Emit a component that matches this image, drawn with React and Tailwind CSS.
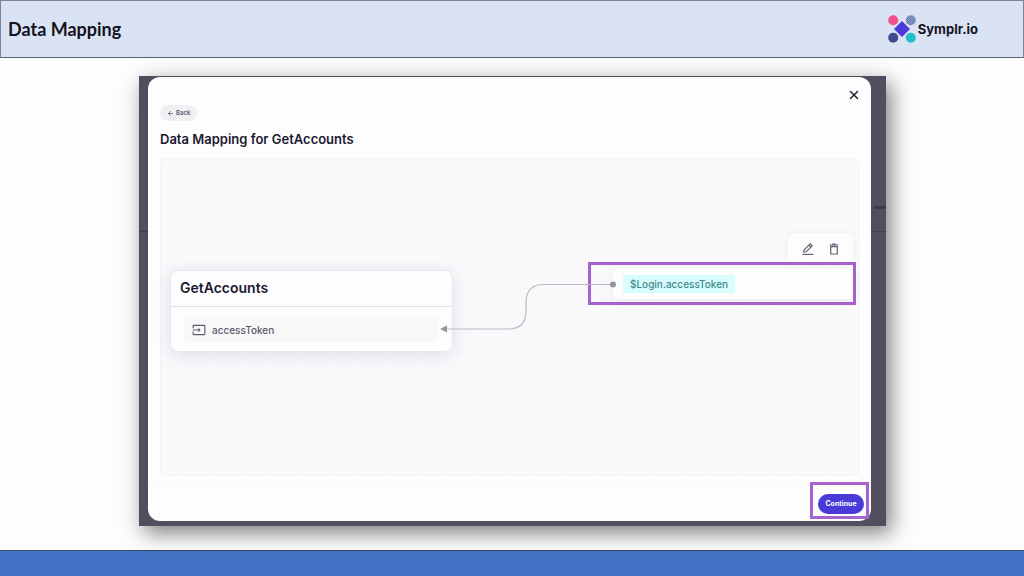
import { X, ArrowLeft } from "lucide-react";
import { MdOutlineInput } from "react-icons/md";

const Logo = () => {
    return (
        <div className="flex items-center gap-0.5">
            <svg className="w-7 h-7" viewBox="0 0 28 28" aria-hidden="true">
                <defs>
                    <pattern id="weaveLight" width="2" height="2" patternUnits="userSpaceOnUse">
                        <rect width="2" height="2" fill="#8f97b8" />
                        <rect width="1" height="1" fill="#5f83c2" />
                        <rect x="1" y="1" width="1" height="1" fill="#5f83c2" />
                    </pattern>
                    <pattern id="weaveDark" width="2" height="2" patternUnits="userSpaceOnUse">
                        <rect width="2" height="2" fill="#2f4aa0" />
                        <rect width="1" height="1" fill="#4d4a78" />
                        <rect x="1" y="1" width="1" height="1" fill="#4d4a78" />
                    </pattern>
                </defs>
                <circle cx="5.2" cy="5.2" r="5" fill="#f0508c" />
                <circle cx="22.8" cy="5.2" r="5" fill="url(#weaveLight)" />
                <circle cx="5.2" cy="22.8" r="5" fill="url(#weaveDark)" />
                <circle cx="22.8" cy="22.8" r="5" fill="#22bfc9" />
                <path d="M14 6 L22 14 L14 22 L6 14 Z" fill="#4b3ad9" />
            </svg>
            <span className="text-[13px] leading-5 font-bold text-[#16151f]">Symplr.io</span>
        </div>
    );
};

const PenIcon = () => (
    <svg className="w-3 h-3" viewBox="0 0 12 12" fill="none" stroke="#5d5b6e" strokeWidth="1.1" aria-hidden="true">
        <path d="M1.6 9.2 L2 7 L8.2 0.8 L10.2 2.8 L4 8.8 Z" strokeLinejoin="round" />
        <path d="M6.9 2.1 L8.9 4.1" />
        <path d="M0.5 11.4 H11.5" />
    </svg>
);

const TrashIcon = () => (
    <svg className="w-3 h-3" viewBox="0 0 12 12" fill="none" stroke="#5d5b6e" strokeWidth="1.2" aria-hidden="true">
        <path d="M1.5 2 H10.5 M4.3 1 H7.7" />
        <path d="M2.7 3.6 V11 H9.3 V3.6 Z" strokeLinejoin="round" />
    </svg>
);

// line from the source value to the input it fills
const Connector = () => (
    <svg className="absolute left-[280px] top-[120px]" width="178" height="60" viewBox="0 0 178 60" fill="none" aria-hidden="true">
        <path
            d="M173 6.5 H104 Q86 6.5 86 24.5 V33 Q86 51 68 51 H6"
            stroke="#b9b8be"
            strokeWidth="1.2"
        />
        <path d="M0 51 L7 47.5 V54.5 Z" fill="#94949e" />
        <circle cx="173" cy="6.5" r="3" fill="#94949e" />
    </svg>
);

const TargetNode = ({ title, field }) => {
    return (
        <div className="absolute left-[10px] top-[112px] w-[283px] rounded-lg bg-[#fdfdfe] inset-ring inset-ring-[#e8e8ec] shadow-[0_3px_16px_rgba(40,40,70,0.12)]">
            <h3 className="h-9 px-2.5 flex items-center text-[14px] leading-5 font-semibold text-[#1b1930]">{title}</h3>
            <div className="border-t border-[#e2e2e6] px-3.5 py-2.5">
                <div className="h-[25px] px-2 flex items-center gap-1.5 rounded-md bg-[#f8f8f9]">
                    <MdOutlineInput className="w-3.5 h-3.5 text-[#5d5b6e]" />
                    <span className="text-[10px] leading-4 font-medium text-[#5a586a]">{field}</span>
                </div>
            </div>
        </div>
    );
};

const SourceNode = ({ value }) => {
    return (
        <div className="absolute left-[428px] top-[75px] w-[268px]">
            <div className="ml-auto mr-[3px] w-[65px] h-[29px] pt-0.5 rounded-t-lg bg-[#fdfdfe] flex items-center justify-center gap-3.5 shadow-[0_0_8px_rgba(40,40,70,0.04)]">
                <button type="button" aria-label="Edit mapping" className="cursor-pointer"><PenIcon /></button>
                <button type="button" aria-label="Delete mapping" className="cursor-pointer"><TrashIcon /></button>
            </div>
            <div className="h-[43px] border-3 border-[#a763cd] flex items-center pl-[22px]">
                <div className="flex-1 h-[30px] px-2.5 flex items-center rounded-md bg-[#fdfdfe] shadow-[0_2px_12px_rgba(40,40,70,0.06)]">
                    <span className="px-[7px] rounded-xs bg-[#d9fdfd] text-[10px] leading-[18px] font-medium text-[#3f898f]">{value}</span>
                </div>
            </div>
        </div>
    );
};

const MappingDialog = () => {
    return (
        <div
            role="dialog"
            aria-labelledby="mapping-title"
            className="relative flex flex-col rounded-xl bg-[#fdfdfe] font-[Inter,sans-serif]"
        >
            <div className="px-3 pt-[11px] flex flex-col">
                <button type="button" aria-label="Close" className="self-end -mr-0.5 cursor-pointer text-[#1b1930]">
                    <X className="w-3.5 h-3.5" strokeWidth={2.5} />
                </button>
                <button
                    type="button"
                    className="self-start mt-[3px] h-4 px-[7px] flex items-center gap-0.5 rounded-full bg-[#f0f0f2] text-[6px] leading-4 font-semibold text-[#55536a] cursor-pointer"
                >
                    <ArrowLeft className="w-[7px] h-[7px]" strokeWidth={2.5} />
                    Back
                </button>
                <h2 id="mapping-title" className="mt-2 text-[13px] leading-5 font-semibold text-[#1b1930]">
                    Data Mapping for GetAccounts
                </h2>
                <div className="relative mt-[9px] h-[318px] rounded-md bg-[#f9f9fc] inset-ring inset-ring-[#f3f3f7] bg-[radial-gradient(circle,#f1f1f5_1px,transparent_1px)] bg-size-[11px_11px] bg-position-[-3px_4px]">
                    <TargetNode title="GetAccounts" field="accessToken" />
                    <SourceNode value="$Login.accessToken" />
                    <Connector />
                </div>
            </div>
            <div className="mt-2.5 border-t border-[#f6f8fa] h-[35px] pr-0.5 flex justify-end items-end">
                <div className="mb-0.5 w-[59px] h-[37px] shrink-0 border-3 border-[#a763cd] pr-0.5 pt-1.5 flex items-center justify-end">
                    <button
                        type="button"
                        className="h-5 w-[46px] rounded-full bg-[#4a3ad8] text-[7px] leading-5 font-bold text-white cursor-pointer"
                    >
                        Continue
                    </button>
                </div>
            </div>
        </div>
    );
};

const App = () => {
    return (
        <div className="min-h-screen flex flex-col bg-[#fdfdfe]">
            <header className="h-[58px] pl-[7px] pr-[45px] flex items-center justify-between bg-[#dae3f3] border border-[#7c82a0] border-b-[#5c5f78] font-[Inter,sans-serif]">
                <h1 className="text-[18px] leading-6 font-bold text-[#14131f] font-[Lato,sans-serif]">Data Mapping</h1>
                <Logo />
            </header>
            <main className="flex-1 pt-[18px] pb-6 pl-[139px] pr-[138px]">
                <div className="relative pt-px pb-[5px] pl-[9px] pr-[15px] bg-[#504f60] shadow-[5px_7px_20px_rgba(0,0,0,0.5)]">
                    {/* page behind the dialog */}
                    <div className="absolute inset-x-0 top-[155px] h-px bg-[#424150]"></div>
                    <div className="absolute right-0 top-[130px] w-3 h-[3px] bg-[#3c3b4a]"></div>
                    <MappingDialog />
                </div>
            </main>
            <footer className="h-[26px] bg-[#4472c4] border-t border-[#3b4a6b]"></footer>
        </div>
    );
};

export default App;
